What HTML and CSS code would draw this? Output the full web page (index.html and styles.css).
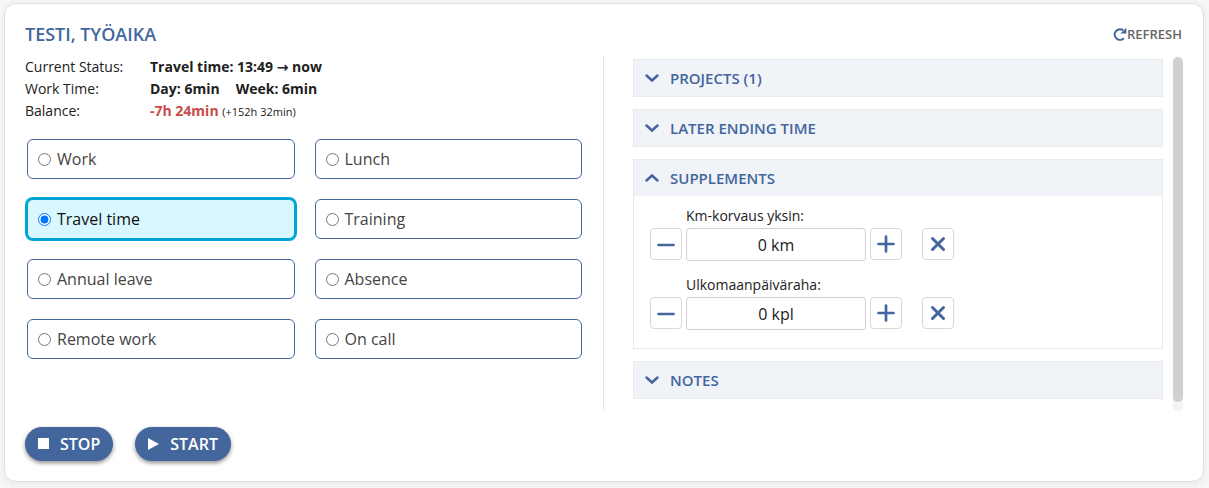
FILE: index.html
```html
<!DOCTYPE html>
<html lang="en">
<head>
<meta charset="utf-8">
<meta name="viewport" content="width=device-width, initial-scale=1">
<title>Työaika</title>
<link rel="stylesheet" href="styles.css">
</head>
<body>
<svg class="sprite" aria-hidden="true">
  <symbol id="chevron" viewBox="0 0 14 14"><path d="M1.500 4.500 7 9.500 12.500 4.500" fill="none" stroke="currentColor" stroke-width="2.500" stroke-linecap="round"/></symbol>
  <symbol id="minus" viewBox="0 0 20 20"><path d="M2.500 11H17.500" fill="none" stroke="currentColor" stroke-width="2.700" stroke-linecap="round"/></symbol>
  <symbol id="plus" viewBox="0 0 20 20"><path d="M2.500 10H17.500M10 2.500V17.500" fill="none" stroke="currentColor" stroke-width="2.700" stroke-linecap="round"/></symbol>
  <symbol id="cross" viewBox="0 0 20 20"><path d="M4.500 4.500 15.500 15.500M15.500 4.500 4.500 15.500" fill="none" stroke="currentColor" stroke-width="3" stroke-linecap="round"/></symbol>
</svg>
<main class="card">
  <header class="card-header">
    <h1 class="title">TESTI, TYÖAIKA</h1>
    <button type="button" class="refresh">
      <svg class="refresh-icon" viewBox="0 0 14 14" aria-hidden="true"><path d="M10.500 3.200A4.900 4.900 0 1 0 11 10.400" fill="none" stroke="currentColor" stroke-width="2"/><path d="M13.400 .6V6H8Z" fill="currentColor"/></svg>
      REFRESH
    </button>
  </header>
  <div class="panels">
    <section class="left">
      <dl class="status">
        <dt>Current Status:</dt>
        <dd>Travel time: 13:49 <span class="arrow">→</span> now</dd>
        <dt>Work Time:</dt>
        <dd class="times"><span>Day: 6min</span><span>Week: 6min</span></dd>
        <dt>Balance:</dt>
        <dd><span class="negative">-7h 24min</span> <span class="total">(+152h 32min)</span></dd>
      </dl>
      <div class="options" role="radiogroup" aria-label="Work type">
        <label class="option"><input type="radio" name="type">Work</label>
        <label class="option"><input type="radio" name="type">Lunch</label>
        <label class="option"><input type="radio" name="type" checked>Travel time</label>
        <label class="option"><input type="radio" name="type">Training</label>
        <label class="option"><input type="radio" name="type">Annual leave</label>
        <label class="option"><input type="radio" name="type">Absence</label>
        <label class="option"><input type="radio" name="type">Remote work</label>
        <label class="option"><input type="radio" name="type">On call</label>
      </div>
    </section>
    <section class="right">
      <div class="accordion">
        <div class="item"><button type="button" class="item-header" aria-expanded="false"><svg class="chevron"><use href="#chevron"/></svg>PROJECTS (1)</button></div>
        <div class="item"><button type="button" class="item-header" aria-expanded="false"><svg class="chevron"><use href="#chevron"/></svg>LATER ENDING TIME</button></div>
        <div class="item">
          <button type="button" class="item-header" aria-expanded="true"><svg class="chevron"><use href="#chevron"/></svg>SUPPLEMENTS</button>
          <div class="item-body">
            <div class="stepper">
              <label class="stepper-label" for="km">Km-korvaus yksin:</label>
              <button type="button" class="step" aria-label="Decrease"><svg class="icon"><use href="#minus"/></svg></button>
              <input class="amount" id="km" type="text" value="0 km">
              <button type="button" class="step" aria-label="Increase"><svg class="icon"><use href="#plus"/></svg></button>
              <button type="button" class="step clear" aria-label="Clear"><svg class="icon"><use href="#cross"/></svg></button>
            </div>
            <div class="stepper">
              <label class="stepper-label" for="allowance">Ulkomaanpäiväraha:</label>
              <button type="button" class="step" aria-label="Decrease"><svg class="icon"><use href="#minus"/></svg></button>
              <input class="amount" id="allowance" type="text" value="0 kpl">
              <button type="button" class="step" aria-label="Increase"><svg class="icon"><use href="#plus"/></svg></button>
              <button type="button" class="step clear" aria-label="Clear"><svg class="icon"><use href="#cross"/></svg></button>
            </div>
          </div>
        </div>
        <div class="item"><button type="button" class="item-header" aria-expanded="false"><svg class="chevron"><use href="#chevron"/></svg>NOTES</button></div>
      </div>
      <div class="scrollbar"><div class="thumb"></div></div>
    </section>
  </div>
  <footer class="actions">
    <button type="button" class="action"><svg class="action-icon" viewBox="0 0 12 12" aria-hidden="true"><path d="M0 0H11V11H0Z" fill="currentColor"/></svg>STOP</button>
    <button type="button" class="action"><svg class="action-icon" viewBox="0 0 12 12" aria-hidden="true"><path d="M0 0 11 6 0 12Z" fill="currentColor"/></svg>START</button>
  </footer>
</main>
</body>
</html>
```
FILE: styles.css
```css
* { box-sizing: border-box; }

body {
  margin: 0;
  padding: 3px 5px 6px 4px;
  background: #f6f6f6;
  color: #212121;
  font: 14px/22px "Open Sans", "Noto Sans", sans-serif;
}

button, input { font: inherit; color: inherit; }
button { cursor: pointer; }

.sprite { display: none; }

.card {
  padding: 20px;
  background: #fff;
  border: 1px solid #dedede;
  border-radius: 12px;
  box-shadow: 0 2px 8px rgba(0, 0, 0, 0.06);
}

.card-header {
  display: flex;
  justify-content: space-between;
  align-items: center;
  height: 20px;
}

.title {
  margin: 0;
  color: #43669d;
  font-size: 18px;
  font-weight: 600;
}

.refresh {
  display: flex;
  align-items: center;
  padding: 0 1px 0 0;
  border: 0;
  background: none;
  color: #666;
  font-size: 13px;
  font-weight: 600;
}

.refresh-icon {
  width: 15px;
  height: 15px;
  color: #43669d;
}

.panels {
  display: grid;
  grid-template-columns: 1fr 1fr;
  margin-top: 12px;
}

.left {
  padding-right: 21px;
  border-right: 1px solid #e8e8e8;
}

.status {
  display: grid;
  grid-template-columns: 125px 1fr;
  grid-auto-rows: 22px;
  margin: 0;
}

.status dd { margin: 0; font-weight: 700; }
.arrow { font-family: "DejaVu Sans", sans-serif; }
.times { display: flex; gap: 16px; }
.negative { color: #cb4a48; }
.total { font-size: 11px; font-weight: 400; }

.options {
  display: grid;
  grid-template-columns: 1fr 1fr;
  gap: 20px;
  padding: 17px 0 0 2px;
}

.option {
  display: flex;
  align-items: center;
  gap: 6px;
  height: 40px;
  padding: 0 10px;
  border: 1px solid #43669d;
  border-radius: 6px;
  color: #444;
  font-size: 16px;
}

.option input { width: 13px; height: 13px; margin: 0; }

.option:has(:checked) {
  border-color: #00a5d3;
  box-shadow: 0 0 0 2px #00a5d3;
  background: #d9f7ff;
  color: #111;
}

.right {
  display: flex;
  gap: 10px;
  padding: 1px 0 0 29px;
}

.accordion {
  display: flex;
  flex: 1;
  flex-direction: column;
  gap: 12px;
  padding: 2px 0 12px;
}

.item { border: 1px solid #e8eaec; }

.item-header {
  display: flex;
  align-items: center;
  gap: 11px;
  width: 100%;
  height: 36px;
  padding: 0 11px;
  border: 0;
  background: #f0f3f8;
  color: #43669d;
  font-size: 15px;
  font-weight: 600;
}

.chevron { width: 14px; height: 14px; }
[aria-expanded="true"] .chevron { transform: rotate(180deg); }

.item-body {
  display: grid;
  gap: 13px;
  padding: 9px 16px 18px;
}

.stepper {
  display: grid;
  grid-template-columns: 32px 180px 32px 48px;
  column-gap: 4px;
}

.stepper-label {
  grid-column: 2 / -1;
  margin-bottom: 1px;
}

.step {
  display: grid;
  place-items: center;
  width: 32px;
  height: 32px;
  padding: 0;
  border: 1px solid #d8d8d8;
  border-radius: 4px;
  background: #fff;
  color: #43669d;
}

.clear { justify-self: end; }
.icon { width: 20px; height: 20px; }

.amount {
  min-width: 0;
  height: 33px;
  padding: 0 8px;
  border: 1px solid #d0d0d0;
  border-radius: 3px;
  background: #fff;
  font-size: 16px;
  text-align: center;
}

.scrollbar {
  width: 10px;
  border-radius: 5px;
  background: #f3f3f3;
}

.thumb {
  height: 97.5%;
  border-radius: 5px;
  background: #d0d0d0;
}

.actions {
  display: flex;
  gap: 22px;
  margin-top: 16px;
}

.action {
  display: flex;
  align-items: center;
  gap: 10px;
  height: 34px;
  padding: 0 13px;
  border: 0;
  border-radius: 17px;
  background: #43669d;
  box-shadow: 0 2px 4px rgba(0, 0, 0, 0.45);
  color: #fff;
  font-size: 16px;
  font-weight: 600;
}

.action-icon { width: 12px; height: 12px; }
```
